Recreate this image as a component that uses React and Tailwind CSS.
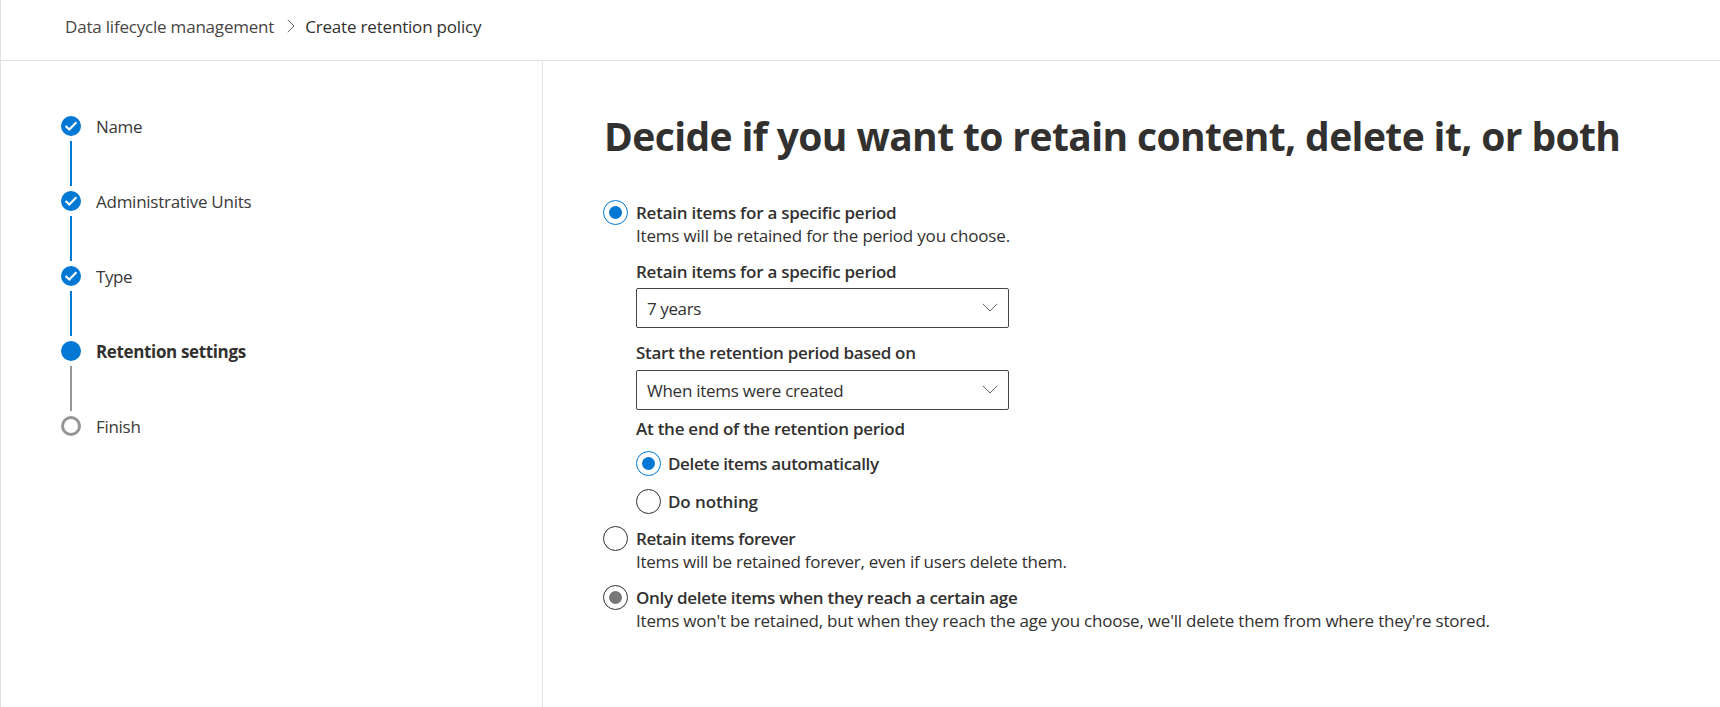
import React, { useState } from "react";

const steps = [
  { name: "Name", status: "done", tracking: "tracking-[-0.35px]" },
  { name: "Administrative Units", status: "done", tracking: "tracking-[-0.26px]" },
  { name: "Type", status: "done", tracking: "tracking-[-0.4px]" },
  { name: "Retention settings", status: "current", tracking: "tracking-[-0.36px]" },
  { name: "Finish", status: "todo", tracking: "tracking-[-0.3px]" },
];

const StepIcon = ({ status }) => {
  if (status === "todo") {
    return <div className="h-5 w-5 rounded-full border-[3px] border-[#979593]" />;
  }
  return (
    <div className="flex h-5 w-5 items-center justify-center rounded-full bg-[#0078d4]">
      {status === "done" && (
        <svg width="20" height="20" viewBox="0 0 20 20" fill="none">
          <path d="M4.6 10 L8.3 13.5 L15.4 6.3" stroke="white" strokeWidth="2.1" />
        </svg>
      )}
    </div>
  );
};

const Radio = ({ checked, muted, label, tracking, gap = "gap-2", onClick }) => (
  <button type="button" onClick={onClick} className={`flex items-center text-left ${gap}`}>
    <span
      className={`flex h-[25px] w-[25px] items-center justify-center rounded-full border ${
        checked ? "border-[#0078d4]" : "border-[#323130]"
      }`}
    >
      {checked && <span className="h-[13px] w-[13px] rounded-full bg-[#0078d4]" />}
      {!checked && muted && <span className="h-[13px] w-[13px] rounded-full bg-[#797775]" />}
    </span>
    <span className={`font-semibold leading-[25px] ${tracking}`}>{label}</span>
  </button>
);

const Select = ({ value, tracking }) => (
  <button
    type="button"
    className="flex h-10 w-[373px] items-center justify-between rounded-[2px] border border-[#484644] pl-[10px] pr-[10px] text-left"
  >
    <span className={`pt-px leading-6 ${tracking}`}>{value}</span>
    <svg width="16" height="9" viewBox="0 0 16 9" fill="none" className="mb-px">
      <path d="M0.8 0.8 L8 8 L15.2 0.8" stroke="#605e5c" strokeWidth="0.95" />
    </svg>
  </button>
);

const App = () => {
  const [mode, setMode] = useState("period");
  const [endAction, setEndAction] = useState("delete");

  return (
    <div className="flex h-[707px] w-full flex-col overflow-hidden border-l border-[#e1e1e1] bg-white font-['Open_Sans',sans-serif] text-[17px] text-[#323130]">
      <header className="flex h-[61px] shrink-0 border-b border-[#e1e1e1] pl-16 pt-[15px] leading-6">
        <span className="tracking-[-0.2px] text-[#484644]">Data lifecycle management</span>
        <svg width="8" height="14" viewBox="0 0 8 14" fill="none" className="ml-[13px] mt-[4px]">
          <path d="M0.8 0.8 L7 7 L0.8 13.2" stroke="#605e5c" strokeWidth="0.95" />
        </svg>
        <span className="ml-[10px] tracking-[-0.19px]">Create retention policy</span>
      </header>

      <div className="flex flex-1">
        <aside className="w-[542px] shrink-0 border-r border-[#e1e1e1] pl-[60px] pt-[55px]">
          {steps.map((step, i) => (
            <div key={step.name} className="flex gap-[15px]">
              <div className="flex flex-col items-center">
                <StepIcon status={step.status} />
                {i < steps.length - 1 && (
                  <div
                    className={`my-[5px] h-[45px] w-[2px] ${
                      step.status === "done" ? "bg-[#0078d4]" : "bg-[#979593]"
                    }`}
                  />
                )}
              </div>
              <span
                className={`leading-[22px] ${step.tracking} ${
                  step.status === "current" ? "font-bold" : "text-[#3b3a39]"
                }`}
              >
                {step.name}
              </span>
            </div>
          ))}
        </aside>

        <main className="flex flex-1 flex-col items-start pl-[60px] pt-[49px]">
          <h1 className="ml-px whitespace-nowrap text-[39px] font-bold leading-[52px] tracking-[-0.61px]">
            Decide if you want to retain content, delete it, or both
          </h1>

          <div className="mt-[38px]">
            <Radio
              checked={mode === "period"}
              label="Retain items for a specific period"
              tracking="tracking-[-0.25px]"
              onClick={() => setMode("period")}
            />
            <div className="flex flex-col items-start pl-[33px]">
              <p className="leading-[22px] tracking-[-0.19px]">
                Items will be retained for the period you choose.
              </p>
              <label className="mb-1 mt-[13px] font-semibold leading-6 tracking-[-0.25px]">
                Retain items for a specific period
              </label>
              <Select value="7 years" tracking="tracking-[-0.4px]" />
              <label className="mb-[5px] mt-[13px] font-semibold leading-6 tracking-[-0.3px]">
                Start the retention period based on
              </label>
              <Select value="When items were created" tracking="tracking-[-0.26px]" />
              <p className="mt-[7px] font-semibold leading-6 tracking-[-0.25px]">
                At the end of the retention period
              </p>
              <div className="mt-[10px] flex flex-col items-start gap-[13px]">
                <Radio
                  checked={endAction === "delete"}
                  label="Delete items automatically"
                  tracking="tracking-[-0.36px]"
                  gap="gap-[7px]"
                  onClick={() => setEndAction("delete")}
                />
                <Radio
                  checked={endAction === "nothing"}
                  label="Do nothing"
                  tracking="tracking-[-0.1px]"
                  gap="gap-[7px]"
                  onClick={() => setEndAction("nothing")}
                />
              </div>
            </div>
          </div>

          <div className="mt-3">
            <Radio
              checked={mode === "forever"}
              label="Retain items forever"
              tracking="tracking-[-0.4px]"
              onClick={() => setMode("forever")}
            />
            <p className="pl-[33px] leading-[22px] tracking-[-0.25px]">
              Items will be retained forever, even if users delete them.
            </p>
          </div>

          <div className="mt-3">
            <Radio
              checked={mode === "delete"}
              muted
              label="Only delete items when they reach a certain age"
              tracking="tracking-[-0.29px]"
              onClick={() => setMode("delete")}
            />
            <p className="whitespace-nowrap pl-[33px] leading-[22px] tracking-[-0.215px]">
              Items won't be retained, but when they reach the age you choose, we'll delete them from where they're stored.
            </p>
          </div>
        </main>
      </div>
    </div>
  );
};

export default App;
